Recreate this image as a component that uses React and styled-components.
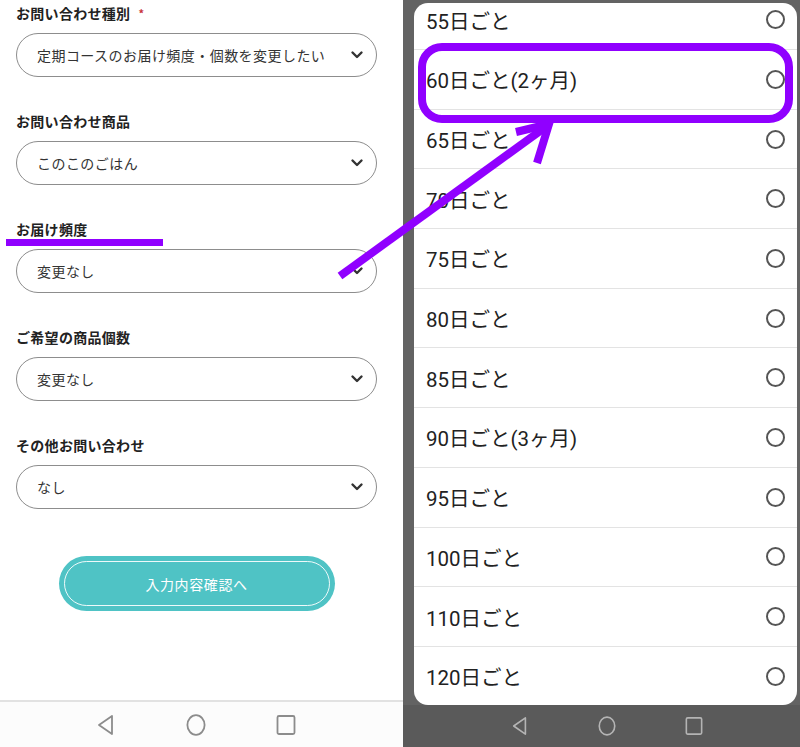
import React from "react";
import styled, { createGlobalStyle } from "styled-components";

const GlobalStyle = createGlobalStyle`
  html, body {
    margin: 0;
    padding: 0;
  }
  body {
    font-family: "Noto Sans CJK JP", "Noto Sans", sans-serif;
    background: #fff;
  }
`;

const fields = [
  { label: "お問い合わせ種別", value: "定期コースのお届け頻度・個数を変更したい", required: true },
  { label: "お問い合わせ商品", value: "このこのごはん" },
  { label: "お届け頻度", value: "変更なし" },
  { label: "ご希望の商品個数", value: "変更なし" },
  { label: "その他お問い合わせ", value: "なし" },
];

const options = [
  "55日ごと",
  "60日ごと(2ヶ月)",
  "65日ごと",
  "70日ごと",
  "75日ごと",
  "80日ごと",
  "85日ごと",
  "90日ごと(3ヶ月)",
  "95日ごと",
  "100日ごと",
  "110日ごと",
  "120日ごと",
];

const Chevron = () => (
  <svg width="14" height="14" viewBox="0 0 14 14">
    <polyline points="2.5,4.5 7,9 11.5,4.5" fill="none" stroke="#333" strokeWidth="2.4" strokeLinecap="round" strokeLinejoin="round" />
  </svg>
);

const NavIcons = ({ color, size }) => (
  <>
    <svg width={size} height={size + 2} viewBox="0 0 20 22">
      <path d="M16 2 L3 11 L16 20 Z" fill="none" stroke={color} strokeWidth="1.8" strokeLinejoin="round" />
    </svg>
    <svg width={size} height={size + 2} viewBox="0 0 20 22">
      <ellipse cx="10" cy="11" rx="8.6" ry="9.8" fill="none" stroke={color} strokeWidth="1.8" />
    </svg>
    <svg width={size} height={size + 2} viewBox="0 0 20 22">
      <rect x="1.5" y="2" width="17" height="18" rx="1.5" fill="none" stroke={color} strokeWidth="1.8" />
    </svg>
  </>
);

export default function App() {
  return (
    <>
      <GlobalStyle />
      <Screen>
        <LeftPanel>
          <Form>
            {fields.map((f) => (
              <Field key={f.label}>
                <Label>
                  {f.label}
                  {f.required && <Required>*</Required>}
                </Label>
                <Select>
                  <span>{f.value}</span>
                  <Chevron />
                </Select>
              </Field>
            ))}
            <SubmitButton>入力内容確認へ</SubmitButton>
          </Form>
          <NavBar>
            <NavIcons color="#8c8c8c" size={20} />
          </NavBar>
        </LeftPanel>

        <RightPanel>
          <Dialog>
            <OptionList>
              {options.map((o) => (
                <OptionRow key={o}>
                  <span>{o}</span>
                  <Radio />
                </OptionRow>
              ))}
            </OptionList>
          </Dialog>
          <DarkNavBar>
            <NavIcons color="#b4b4b4" size={18} />
          </DarkNavBar>
        </RightPanel>

        <Annotation width="800" height="747" viewBox="0 0 800 747">
          <rect x="6" y="239" width="157" height="7" fill="#9000ff" />
          <rect x="422" y="47" width="367" height="72" rx="20" fill="none" stroke="#9000ff" strokeWidth="8" />
          <line x1="340" y1="276" x2="547" y2="126" stroke="#9000ff" strokeWidth="8" />
          <polyline points="516,132 549,124 537,163" fill="none" stroke="#9000ff" strokeWidth="8" strokeLinejoin="miter" />
        </Annotation>
      </Screen>
    </>
  );
}

const Screen = styled.div`
  position: relative;
  display: flex;
  width: 800px;
  height: 747px;
  overflow: hidden;
`;

const LeftPanel = styled.div`
  width: 403px;
  display: flex;
  flex-direction: column;
  background: #fff;
`;

const Form = styled.div`
  flex: 1;
  display: flex;
  flex-direction: column;
  gap: 34px;
  padding: 3px 26px 0 16px;
`;

const Field = styled.div`
  display: flex;
  flex-direction: column;
  gap: 10px;
`;

const Label = styled.div`
  font-size: 14px;
  font-weight: 700;
  line-height: 20px;
  color: #222;
  letter-spacing: 0.3px;
`;

const Required = styled.span`
  color: #c8323c;
  font-size: 11px;
  margin-left: 8px;
  vertical-align: top;
`;

const Select = styled.div`
  box-sizing: border-box;
  height: 44px;
  border: 1px solid #8d8d8d;
  border-radius: 22px;
  display: flex;
  align-items: center;
  justify-content: space-between;
  padding: 0 12px 0 20px;
  font-size: 14px;
  letter-spacing: 0.45px;
  color: #333;
`;

const SubmitButton = styled.div`
  position: relative;
  align-self: center;
  width: 276px;
  height: 55px;
  margin-top: 13px;
  border-radius: 28px;
  background: #4fc3c5;
  color: #fff;
  font-size: 14px;
  letter-spacing: 0.6px;
  display: flex;
  align-items: center;
  justify-content: center;

  &::before {
    content: "";
    position: absolute;
    inset: 5px;
    border: 1.5px solid rgba(255, 255, 255, 0.9);
    border-radius: 23px;
  }
`;

const NavBar = styled.div`
  height: 45px;
  border-top: 2px solid #e2e2e2;
  background: #fcfcfc;
  display: flex;
  align-items: center;
  padding-left: 96px;
  gap: 70px;
`;

const RightPanel = styled.div`
  width: 397px;
  display: flex;
  flex-direction: column;
  background: #636363;
`;

const Dialog = styled.div`
  flex: 1;
  margin: 3px 3px 0 11px;
  background: #fff;
  border-radius: 14px;
  overflow: hidden;
`;

const OptionList = styled.div`
  margin-top: -12.7px;
`;

const OptionRow = styled.div`
  box-sizing: border-box;
  height: 59.7px;
  border-bottom: 1px solid #e3e3e3;
  display: flex;
  align-items: center;
  justify-content: space-between;
  padding: 0 12px;
  font-family: Roboto, "Noto Sans CJK JP", sans-serif;
  font-size: 20.5px;
  color: #222;
`;

const Radio = styled.div`
  box-sizing: border-box;
  width: 19px;
  height: 19px;
  border: 2px solid #555;
  border-radius: 50%;
`;

const DarkNavBar = styled.div`
  height: 42px;
  background: #5a5a5a;
  display: flex;
  align-items: center;
  padding-left: 108px;
  gap: 69px;
`;

const Annotation = styled.svg`
  position: absolute;
  top: 0;
  left: 0;
  pointer-events: none;
`;
